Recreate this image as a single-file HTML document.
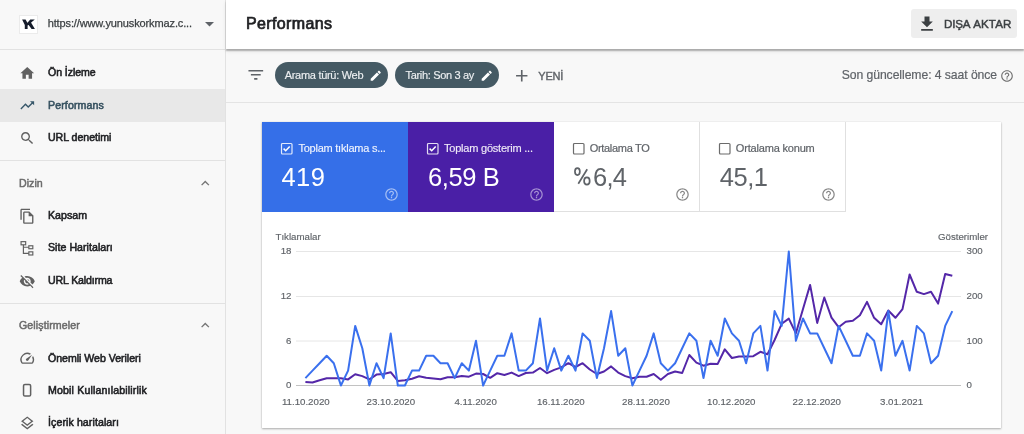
<!DOCTYPE html>
<html><head><meta charset="utf-8">
<style>
*{margin:0;padding:0;box-sizing:border-box}
html,body{width:1024px;height:434px;overflow:hidden;background:#f8f8f8;font-family:"Liberation Sans",sans-serif}
.a{position:absolute;white-space:nowrap;line-height:1}
svg{position:absolute;overflow:visible}
#side{position:absolute;left:0;top:0;width:226px;height:434px;background:#f8f8f8;border-right:1px solid #e2e2e2}
.hr{position:absolute;left:0;width:225px;height:1px;background:#e2e2e2}
.nav{font-size:10.6px;color:#202124;left:48px;-webkit-text-stroke:.55px #202124;letter-spacing:-0.1px}
.sec{font-size:10.6px;color:#6b6b6b;left:19px;-webkit-text-stroke:.5px #6b6b6b;letter-spacing:-0.1px}
.ic{fill:#616161}
#hdr{position:absolute;left:226px;top:0;width:798px;height:49px;background:#fff;box-shadow:0 1.8px 1.2px rgba(0,0,0,.25),0 2px 4px rgba(0,0,0,.1)}
#tb{position:absolute;left:226px;top:49px;width:798px;height:54px;background:#f8f8f8;border-bottom:1px solid #e4e4e4}
.chip{position:absolute;top:62px;height:26px;border-radius:13px;background:#455a64}
.chipt{font-size:11px;color:#eceff1;top:69.5px;-webkit-text-stroke:.15px #eceff1}
#card{position:absolute;left:262px;top:122px;width:739px;height:305.8px;background:#fff;box-shadow:0 1px 2px rgba(0,0,0,.3),0 0 1px rgba(0,0,0,.15)}
.tile{position:absolute;top:122px;height:90px;width:146px}
.tl{font-size:11px;top:142.5px}
.tv{font-size:25.5px;top:164.6px}
.lab{font-size:9.7px;color:#5f6368;-webkit-text-stroke:.15px #5f6368}
</style></head><body>
<div id="root" style="position:absolute;left:0;top:0;width:1024px;height:434px;will-change:transform">
<div id="side"></div>
<div class="hr" style="top:49px"></div>
<!-- favicon -->
<div style="position:absolute;left:19px;top:14.5px;width:19px;height:19px;background:#fff;border:1px solid #ebebeb"></div>
<svg style="left:19px;top:14px" width="20" height="20" viewBox="19 14 20 20"><path fill="#151c2b" d="M22.1 19.4H25.6L27.6 23.3V29.1H24.8V25.1ZM30.3 19.4H34.8L27.6 25.4L26.8 23.4ZM28.9 22.9L30.7 21.9L34.9 29.1H31.6L28 24.3Z"/></svg>
<div class="a" style="left:47.7px;top:17.7px;font-size:11px;color:#3c4043;-webkit-text-stroke:.25px #3c4043;letter-spacing:-0.126px">https://www.yunuskorkmaz.c...</div>
<svg style="left:205px;top:21.5px" width="9" height="5" viewBox="0 0 9 5"><path d="M0 0h9L4.5 4.6z" fill="#5f6368"/></svg>

<!-- nav -->
<div style="position:absolute;left:0;top:89px;width:225px;height:33px;background:#e8e8e8"></div>
<svg style="left:18.7px;top:64.9px" width="16.5" height="16.5" viewBox="0 0 24 24"><path class="ic" d="M10 20v-6h4v6h5v-8h3L12 3 2 12h3v8z"/></svg>
<div class="a nav" style="letter-spacing:-0.077px;top:67px">Ön İzleme</div>
<svg style="left:18.6px;top:96.8px" width="16.5" height="16.5" viewBox="0 0 24 24"><path fill="#37576a" d="M16 6l2.29 2.29-4.88 4.88-4-4L2 16.59 3.41 18l6-6 4 4 6.3-6.29L22 12V6z"/></svg>
<div class="a nav" style="letter-spacing:0.123px;top:99.8px;color:#35505f;-webkit-text-stroke:.55px #35505f">Performans</div>
<svg style="left:18.6px;top:129.8px" width="16.5" height="16.5" viewBox="0 0 24 24"><path class="ic" d="M15.5 14h-.79l-.28-.27C15.41 12.59 16 11.11 16 9.5 16 5.91 13.09 3 9.5 3S3 5.91 3 9.5 5.91 16 9.5 16c1.61 0 3.09-.59 4.23-1.57l.27.28v.79l5 4.99L20.49 19l-4.99-5zm-6 0C7.01 14 5 11.99 5 9.5S7.01 5 9.5 5 14 7.01 14 9.5 11.99 14 9.5 14z"/></svg>
<div class="a nav" style="letter-spacing:-0.041px;top:132px">URL denetimi</div>

<div class="hr" style="top:160px"></div>
<div class="a sec" style="letter-spacing:0.051px;top:177.5px">Dizin</div>
<svg style="left:197px;top:174.5px" width="16.5" height="16.5" viewBox="0 0 24 24"><path fill="#757575" d="M12 8l-6 6 1.41 1.41L12 10.83l4.59 4.58L18 14z"/></svg>
<svg style="left:18.6px;top:208px" width="16.5" height="16.5" viewBox="0 0 24 24"><path class="ic" d="M16 1H4c-1.1 0-2 .9-2 2v14h2V3h12V1zm-1 4H8c-1.1 0-1.99.9-1.99 2L6 21c0 1.1.89 2 1.99 2H19c1.1 0 2-.9 2-2V11l-6-6zM8 21V7h6v5h5v9H8z"/></svg>
<div class="a nav" style="letter-spacing:0.022px;top:210.3px">Kapsam</div>
<svg style="left:18.6px;top:240px" width="16.5" height="16.5" viewBox="0 0 24 24"><g fill="none" stroke="#616161" stroke-width="1.7"><rect x="3" y="2.4" width="6.7" height="4.6"/><rect x="14.3" y="8.4" width="5.8" height="4.3"/><rect x="14.3" y="17.2" width="5.8" height="4.6"/><path d="M6.4 7V19.5H14.3M6.4 10.5H14.3"/></g></svg>
<div class="a nav" style="letter-spacing:0.041px;top:242.4px">Site Haritaları</div>
<svg style="left:18.6px;top:272.5px" width="16.5" height="16.5" viewBox="0 0 24 24"><path class="ic" d="M12 7c2.76 0 5 2.24 5 5 0 .65-.13 1.26-.36 1.83l2.92 2.92c1.51-1.26 2.7-2.89 3.43-4.75-1.73-4.39-6-7.5-11-7.5-1.4 0-2.74.25-3.98.7l2.16 2.16C10.74 7.13 11.35 7 12 7zM2 4.27l2.28 2.28.46.46C3.08 8.3 1.78 10.02 1 12c1.73 4.39 6 7.5 11 7.5 1.55 0 3.03-.3 4.38-.84l.42.42L19.73 22 21 20.73 3.27 3 2 4.27zM7.53 9.8l1.55 1.55c-.05.21-.08.43-.08.65 0 1.66 1.34 3 3 3 .22 0 .44-.03.65-.08l1.55 1.55c-.67.33-1.41.53-2.2.53-2.76 0-5-2.24-5-5 0-.79.2-1.53.53-2.2zm4.31-.78l3.15 3.15.02-.16c0-1.66-1.34-3-3-3l-.17.01z"/></svg>
<div class="a nav" style="letter-spacing:-0.153px;top:274.8px">URL Kaldırma</div>

<div class="hr" style="top:303px"></div>
<div class="a sec" style="letter-spacing:0.103px;top:320.4px">Geliştirmeler</div>
<svg style="left:197px;top:317px" width="16.5" height="16.5" viewBox="0 0 24 24"><path fill="#757575" d="M12 8l-6 6 1.41 1.41L12 10.83l4.59 4.58L18 14z"/></svg>
<svg style="left:18.7px;top:349.7px" width="16.5" height="16.5" viewBox="0 0 24 24"><path class="ic" d="M20.38 8.57l-1.23 1.85a8 8 0 0 1-.22 7.58H5.07A8 8 0 0 1 15.58 6.85l1.85-1.23A10 10 0 0 0 3.35 19a2 2 0 0 0 1.72 1h13.85a2 2 0 0 0 1.74-1 10 10 0 0 0-.27-10.44zm-9.79 6.84a2 2 0 0 0 2.83 0l5.66-8.49-8.49 5.66a2 2 0 0 0 0 2.83z"/></svg>
<div class="a nav" style="letter-spacing:-0.032px;top:352.7px">Önemli Web Verileri</div>
<svg style="left:18.5px;top:382px" width="16.5" height="16.5" viewBox="0 0 24 24"><rect x="6.6" y="3.6" width="10.3" height="16.8" rx="2" fill="none" stroke="#616161" stroke-width="2.2"/></svg>
<div class="a nav" style="letter-spacing:0.157px;top:385.1px">Mobil Kullanılabilirlik</div>
<svg style="left:18.6px;top:414.5px" width="16.5" height="16.5" viewBox="0 0 24 24"><path class="ic" d="M11.99 18.54l-7.37-5.73L3 14.07l9 7 9-7-1.63-1.27-7.38 5.74zM12 16l7.36-5.73L21 9l-9-7-9 7 1.63 1.27L12 16zm0-11.47L17.74 9 12 13.47 6.26 9 12 4.53z"/></svg>
<div class="a nav" style="letter-spacing:0.089px;top:417.2px">İçerik haritaları</div>

<!-- header -->
<div id="tb"></div>
<div id="hdr"></div>
<div class="a" style="left:246px;top:15.5px;font-size:16px;color:#202124;-webkit-text-stroke:.7px #202124;letter-spacing:0.360px">Performans</div>
<div style="position:absolute;left:911px;top:9px;width:106px;height:29px;background:#eeeeee;border-radius:3px"></div>
<svg style="left:917.3px;top:13.5px" width="20" height="20" viewBox="0 0 24 24"><path fill="#3c4043" d="M19 9h-4V3H9v6H5l7 7 7-7zM5 18v2h14v-2H5z"/></svg>
<div class="a" style="left:944px;top:18px;font-size:11.6px;color:#3c4043;-webkit-text-stroke:.45px #3c4043;letter-spacing:-0.216px">DIŞA</div><div class="a" style="left:973.2px;top:18px;font-size:11.6px;color:#3c4043;-webkit-text-stroke:.45px #3c4043;letter-spacing:0.101px">AKTAR</div>

<!-- toolbar -->
<svg style="left:245.8px;top:65.3px" width="19.6" height="19.6" viewBox="0 0 24 24"><path fill="#5f6368" d="M10 18h4v-2h-4v2zM3 6v2h18V6H3zm3 7h12v-2H6v2z"/></svg>
<div class="chip" style="left:275px;width:113px"></div>
<div class="a chipt" style="left:284.7px;letter-spacing:-0.290px">Arama türü: Web</div>
<svg style="left:368.5px;top:68.5px" width="13.5" height="13.5" viewBox="0 0 24 24"><path fill="#fff" d="M3 17.25V21h3.75L17.81 9.94l-3.75-3.75L3 17.25zM20.71 7.04c.39-.39.39-1.02 0-1.41l-2.34-2.34c-.39-.39-1.02-.39-1.41 0l-1.83 1.83 3.75 3.75 1.83-1.83z"/></svg>
<div class="chip" style="left:395px;width:104px"></div>
<div class="a chipt" style="left:405.5px;letter-spacing:-0.332px">Tarih: Son 3 ay</div>
<svg style="left:479.5px;top:68.5px" width="13.5" height="13.5" viewBox="0 0 24 24"><path fill="#fff" d="M3 17.25V21h3.75L17.81 9.94l-3.75-3.75L3 17.25zM20.71 7.04c.39-.39.39-1.02 0-1.41l-2.34-2.34c-.39-.39-1.02-.39-1.41 0l-1.83 1.83 3.75 3.75 1.83-1.83z"/></svg>
<svg style="left:512px;top:65.5px" width="19.5" height="19.5" viewBox="0 0 24 24"><path fill="#5f6368" d="M19 13h-6v6h-2v-6H5v-2h6V5h2v6h6v2z"/></svg>
<div class="a" style="left:538.3px;top:70.7px;font-size:11px;color:#5f6368;-webkit-text-stroke:.4px #5f6368;letter-spacing:-0.197px">YENİ</div>
<div class="a" style="left:841.7px;top:69px;font-size:12.2px;color:#5f6368;-webkit-text-stroke:.2px #5f6368;letter-spacing:-0.067px">Son güncelleme: 4 saat önce</div>
<svg style="left:1000.2px;top:69.3px" width="14" height="14" viewBox="0 0 24 24"><path fill="#707070" d="M11 18h2v-2h-2v2zm1-16C6.48 2 2 6.48 2 12s4.48 10 10 10 10-4.48 10-10S17.52 2 12 2zm0 18c-4.41 0-8-3.59-8-8s3.59-8 8-8 8 3.59 8 8-3.59 8-8 8zm0-14c-2.21 0-4 1.79-4 4h2c0-1.1.9-2 2-2s2 .9 2 2c0 2-3 1.75-3 5h2c0-2.25 3-2.5 3-5 0-2.21-1.79-4-4-4z"/></svg>

<!-- card -->
<div id="card"></div>
<div class="tile" style="left:262px;background:#356fe8"></div>
<div class="tile" style="left:408px;background:#4a1fa6"></div>
<div class="tile" style="left:554px;border-right:1px solid #e0e0e0;border-bottom:1px solid #e0e0e0"></div>
<div class="tile" style="left:700px;border-right:1px solid #e0e0e0;border-bottom:1px solid #e0e0e0"></div>

<svg style="left:279px;top:141px" width="15" height="15" viewBox="0 0 15 15"><rect x="2.5" y="2.5" width="10.5" height="10.5" rx="1" fill="none" stroke="#fff" stroke-width="1.2" opacity=".85"/><path d="M4.6 7.6l2.1 2.1 4-4.2" fill="none" stroke="#fff" stroke-width="1.5"/></svg>
<div class="a tl" style="left:298.4px;color:#eef2fd;-webkit-text-stroke:.15px #eef2fd;letter-spacing:-0.231px">Toplam tıklama s...</div>
<div class="a tv" style="letter-spacing:0.418px;left:281.5px;color:#fff">419</div>
<svg style="left:425px;top:141px" width="15" height="15" viewBox="0 0 15 15"><rect x="2.5" y="2.5" width="10.5" height="10.5" rx="1" fill="none" stroke="#fff" stroke-width="1.2" opacity=".85"/><path d="M4.6 7.6l2.1 2.1 4-4.2" fill="none" stroke="#fff" stroke-width="1.5"/></svg>
<div class="a tl" style="left:444px;color:#efeaf7;-webkit-text-stroke:.15px #efeaf7;letter-spacing:-0.217px">Toplam gösterim ...</div>
<div class="a tv" style="letter-spacing:-0.389px;left:428px;color:#fff">6,59 B</div>
<svg style="left:571px;top:141px" width="15" height="15" viewBox="0 0 15 15"><rect x="2.5" y="2.5" width="10.5" height="10.5" rx="1" fill="none" stroke="#6b6b6b" stroke-width="1.2"/></svg>
<div class="a tl" style="left:589.7px;color:#5f6368;-webkit-text-stroke:.2px #5f6368;letter-spacing:-0.307px">Ortalama TO</div>
<svg style="left:0;top:0" width="1024" height="434"><g fill="none" stroke="#5f6368" stroke-width="1.7"><ellipse cx="577.4" cy="171.6" rx="2.45" ry="3.5"/><ellipse cx="586.9" cy="181" rx="2.8" ry="3.6"/><path d="M578.3 183.8L587.2 169.2"/></g></svg>
<div class="a tv" style="letter-spacing:-0.751px;left:593px;color:#5f6368">6,4</div>
<svg style="left:717px;top:141px" width="15" height="15" viewBox="0 0 15 15"><rect x="2.5" y="2.5" width="10.5" height="10.5" rx="1" fill="none" stroke="#6b6b6b" stroke-width="1.2"/></svg>
<div class="a tl" style="left:735.8px;color:#5f6368;-webkit-text-stroke:.2px #5f6368;letter-spacing:-0.180px">Ortalama konum</div>
<div class="a tv" style="letter-spacing:-0.460px;left:719.7px;color:#5f6368">45,1</div>

<svg style="left:383.5px;top:186.7px" width="15" height="15" viewBox="0 0 24 24"><path fill="#fff" opacity=".55" d="M11 18h2v-2h-2v2zm1-16C6.48 2 2 6.48 2 12s4.48 10 10 10 10-4.48 10-10S17.52 2 12 2zm0 18c-4.41 0-8-3.59-8-8s3.59-8 8-8 8 3.59 8 8-3.59 8-8 8zm0-14c-2.21 0-4 1.79-4 4h2c0-1.1.9-2 2-2s2 .9 2 2c0 2-3 1.75-3 5h2c0-2.25 3-2.5 3-5 0-2.21-1.79-4-4-4z"/></svg>
<svg style="left:529px;top:186.7px" width="15" height="15" viewBox="0 0 24 24"><path fill="#fff" opacity=".5" d="M11 18h2v-2h-2v2zm1-16C6.48 2 2 6.48 2 12s4.48 10 10 10 10-4.48 10-10S17.52 2 12 2zm0 18c-4.41 0-8-3.59-8-8s3.59-8 8-8 8 3.59 8 8-3.59 8-8 8zm0-14c-2.21 0-4 1.79-4 4h2c0-1.1.9-2 2-2s2 .9 2 2c0 2-3 1.75-3 5h2c0-2.25 3-2.5 3-5 0-2.21-1.79-4-4-4z"/></svg>
<svg style="left:675px;top:186.7px" width="15" height="15" viewBox="0 0 24 24"><path fill="#888" d="M11 18h2v-2h-2v2zm1-16C6.48 2 2 6.48 2 12s4.48 10 10 10 10-4.48 10-10S17.52 2 12 2zm0 18c-4.41 0-8-3.59-8-8s3.59-8 8-8 8 3.59 8 8-3.59 8-8 8zm0-14c-2.21 0-4 1.79-4 4h2c0-1.1.9-2 2-2s2 .9 2 2c0 2-3 1.75-3 5h2c0-2.25 3-2.5 3-5 0-2.21-1.79-4-4-4z"/></svg>
<svg style="left:821px;top:186.7px" width="15" height="15" viewBox="0 0 24 24"><path fill="#888" d="M11 18h2v-2h-2v2zm1-16C6.48 2 2 6.48 2 12s4.48 10 10 10 10-4.48 10-10S17.52 2 12 2zm0 18c-4.41 0-8-3.59-8-8s3.59-8 8-8 8 3.59 8 8-3.59 8-8 8zm0-14c-2.21 0-4 1.79-4 4h2c0-1.1.9-2 2-2s2 .9 2 2c0 2-3 1.75-3 5h2c0-2.25 3-2.5 3-5 0-2.21-1.79-4-4-4z"/></svg>

<!-- chart -->
<div class="a lab" style="left:275.5px;top:232px">Tıklamalar</div>
<div class="a lab" style="left:938px;top:232px">Gösterimler</div>
<svg style="left:0;top:0.5px" width="1024" height="434">
<g stroke="#e6e6e6" stroke-width="1"><path d="M296 250.5H961M296 295.5H961M296 340H961"/></g>
<path d="M296 384.5H961" stroke="#c2c2c2" stroke-width="1.1"/>
<polyline points="305.4,380.9 312.5,381.5 319.6,379.3 326.7,377.2 333.8,377.2 340.9,377.2 348.1,378.4 355.2,373.2 362.3,375.1 369.4,378.4 376.5,373.6 383.6,373.0 390.7,371.2 397.8,379.9 404.9,379.3 412.0,377.8 419.1,375.3 426.2,376.8 433.4,377.4 440.5,378.2 447.6,376.3 454.7,376.3 461.8,375.1 468.9,375.7 476.0,372.6 483.1,373.0 490.2,376.8 497.3,372.2 504.4,374.0 511.6,371.6 518.7,375.1 525.8,372.0 532.9,371.6 540.0,367.0 547.1,372.2 554.2,368.9 561.3,366.4 568.4,362.2 575.5,366.0 582.6,362.2 589.8,368.5 596.9,373.0 604.0,370.5 611.1,365.4 618.2,371.6 625.3,375.1 632.4,377.2 639.5,375.7 646.6,375.7 653.7,373.0 660.8,378.8 667.9,373.0 675.1,370.5 682.2,372.0 689.3,354.0 696.4,361.6 703.5,364.7 710.6,362.7 717.7,362.9 724.8,348.3 731.9,357.0 739.0,355.6 746.1,355.6 753.3,355.2 760.4,350.8 767.5,353.3 774.6,339.0 781.7,322.8 788.8,317.6 795.9,332.3 803.0,308.0 810.1,283.9 817.2,321.9 824.3,296.5 831.5,316.7 838.6,326.2 845.7,320.8 852.8,319.8 859.9,314.2 867.0,300.9 874.1,316.8 881.2,323.3 888.3,309.5 895.4,316.8 902.5,308.1 909.6,273.5 916.8,290.8 923.9,293.1 931.0,290.8 938.1,302.6 945.2,273.0 952.3,274.8" fill="none" stroke="#5427a8" stroke-width="2" stroke-linejoin="round"/>
<polyline points="305.4,377.1 312.5,369.6 319.6,362.2 326.7,354.7 333.8,362.2 340.9,384.5 348.1,369.6 355.2,324.9 362.3,347.3 369.4,384.5 376.5,362.2 383.6,377.1 390.7,332.4 397.8,384.5 404.9,384.5 412.0,369.6 419.1,369.6 426.2,354.7 433.4,354.7 440.5,362.2 447.6,362.2 454.7,377.1 461.8,362.2 468.9,369.6 476.0,339.8 483.1,384.5 490.2,369.6 497.3,354.7 504.4,354.7 511.6,332.4 518.7,369.6 525.8,369.6 532.9,362.2 540.0,317.5 547.1,369.6 554.2,347.3 561.3,369.6 568.4,354.7 575.5,369.6 582.6,332.4 589.8,339.8 596.9,377.1 604.0,347.3 611.1,310.1 618.2,354.7 625.3,347.3 632.4,384.5 639.5,369.6 646.6,354.7 653.7,332.4 660.8,362.2 667.9,369.6 675.1,362.2 682.2,347.3 689.3,332.4 696.4,339.8 703.5,377.1 710.6,339.8 717.7,354.7 724.8,317.5 731.9,332.4 739.0,339.8 746.1,362.2 753.3,332.4 760.4,324.9 767.5,369.6 774.6,310.1 781.7,324.9 788.8,250.5 795.9,339.8 803.0,317.5 810.1,332.4 817.2,332.4 824.3,347.3 831.5,362.2 838.6,324.9 845.7,339.8 852.8,354.7 859.9,354.7 867.0,332.4 874.1,339.8 881.2,369.6 888.3,310.1 895.4,354.7 902.5,339.8 909.6,369.6 916.8,324.9 923.9,332.4 931.0,362.2 938.1,354.7 945.2,324.9 952.3,310.1" fill="none" stroke="#3a70ee" stroke-width="2" stroke-linejoin="round"/>
</svg>
<div class="a lab" style="left:280.7px;top:246px">18</div>
<div class="a lab" style="left:280.7px;top:291px">12</div>
<div class="a lab" style="left:286px;top:335.5px">6</div>
<div class="a lab" style="left:286px;top:380.3px">0</div>
<div class="a lab" style="left:966.6px;top:246px">300</div>
<div class="a lab" style="left:966.6px;top:291px">200</div>
<div class="a lab" style="left:966.6px;top:335.5px">100</div>
<div class="a lab" style="left:966.6px;top:380.3px">0</div>
<div class="a lab" style="left:281.9px;top:397px">11.10.2020</div>
<div class="a lab" style="left:366.6px;top:397px">23.10.2020</div>
<div class="a lab" style="left:454.4px;top:397px">4.11.2020</div>
<div class="a lab" style="left:536.9px;top:397px">16.11.2020</div>
<div class="a lab" style="left:622px;top:397px">28.11.2020</div>
<div class="a lab" style="left:707px;top:397px">10.12.2020</div>
<div class="a lab" style="left:792.5px;top:397px">22.12.2020</div>
<div class="a lab" style="left:880px;top:397px">3.01.2021</div>
</div>
</body></html>
